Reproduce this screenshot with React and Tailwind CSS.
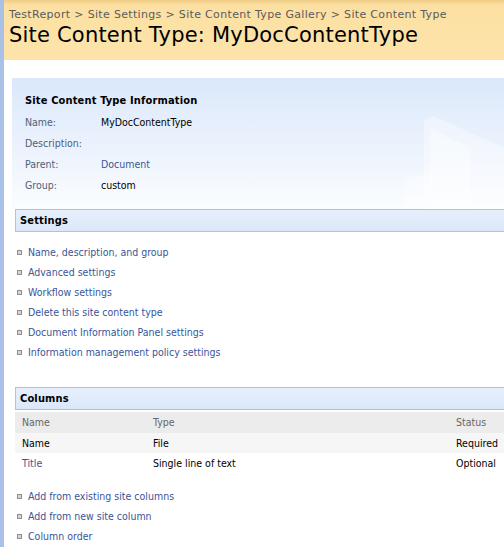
import React from "react";

const body = "font-['DejaVu_Sans_Condensed','DejaVu_Sans',sans-serif] text-[10.5px]";

function Bullet() {
  return <span className="inline-block w-[5px] h-[5px] border border-[#8e8e8e] bg-[#d6d6d6] shrink-0" />;
}

function LinkList({ items }) {
  return (
    <div className="flex flex-col ml-[5px]">
      {items.map((t) => (
        <div key={t} className="flex items-center h-[20px] gap-[6px]">
          <Bullet />
          <span className="text-[#3a559a] leading-[20px]">{t}</span>
        </div>
      ))}
    </div>
  );
}

function SectionBar({ title }) {
  return (
    <div className="ml-[3px] h-[23px] flex items-center pl-[4px] pt-[2px] border-t border-b border-l border-[#a9c4ea] bg-[linear-gradient(to_bottom,#e6effc,#dbe7f9)]">
      <span className="font-bold text-black text-[11px] tracking-[0.15px]">{title}</span>
    </div>
  );
}

export default function App() {
  const info = [
    ["Name:", "MyDocContentType", false],
    ["Description:", "", false],
    ["Parent:", "Document", true],
    ["Group:", "custom", false],
  ];
  return (
    <div className="w-[504px] h-[547px] overflow-hidden flex bg-white">
      <div className="w-[4px] shrink-0 bg-[#a9c1e7]" />
      <div className="flex-1 min-w-0 flex flex-col">
        <div className="h-[60px] pl-[5px] bg-[linear-gradient(to_bottom,#f0cc84_0px,#fce0a2_5px,#fde4ab_60px)] font-['DejaVu_Sans',sans-serif]">
          <div className="pt-[8px] text-[11px] leading-[14px] tracking-[0.33px] text-[#5b5b5b] whitespace-nowrap">
            TestReport &gt; Site Settings &gt; Site Content Type Gallery &gt; Site Content Type
          </div>
          <div className="text-[21px] leading-[26px] tracking-[0.2px] text-black whitespace-nowrap">
            Site Content Type: MyDocContentType
          </div>
        </div>
        <div className={`mt-[18px] ml-[8px] ${body}`}>
          <div className="relative pl-[13px] pt-[12px] pb-[13px] bg-[linear-gradient(to_bottom,#dbe8fb,#eef4fd_60%,#fbfdff)] overflow-hidden">
            <svg className="absolute right-0 top-[20px]" width="100" height="112" viewBox="0 0 100 112">
              <polygon points="20,22 30,18 100,50 100,112 20,112" fill="#ffffff" opacity="0.35" />
              <polygon points="26,30 66,50 66,112 26,112" fill="#ffffff" opacity="0.35" />
              <polygon points="0,80 28,74 28,112 0,112" fill="#ffffff" opacity="0.3" />
            </svg>
            <div className="relative h-[21px] leading-[21px] mb-[1px] font-bold text-black text-[11px] tracking-[0.15px]">
              Site Content Type Information
            </div>
            {info.map(([k, v, link]) => (
              <div key={k} className="relative flex h-[21px] leading-[21px]">
                <span className="w-[76px] text-[#4f607a]">{k}</span>
                <span className={link ? "text-[#3a559a]" : "text-black"}>{v}</span>
              </div>
            ))}
          </div>
          <SectionBar title="Settings" />
          <div className="mt-[10px]">
            <LinkList
              items={[
                "Name, description, and group",
                "Advanced settings",
                "Workflow settings",
                "Delete this site content type",
                "Document Information Panel settings",
                "Information management policy settings",
              ]}
            />
          </div>
          <div className="mt-[25px]">
            <SectionBar title="Columns" />
          </div>
          <div className="ml-[3px] mt-[2px]">
            <div className="grid grid-cols-[131px_303px_1fr] pl-[7px] h-[21px] leading-[21px] bg-[#ececec] text-[#666666]">
              <span>Name</span>
              <span>Type</span>
              <span>Status</span>
            </div>
            <div className="grid grid-cols-[131px_303px_1fr] pl-[7px] h-[20px] leading-[20px] bg-[#f6f6f6] text-black">
              <span>Name</span>
              <span>File</span>
              <span>Required</span>
            </div>
            <div className="grid grid-cols-[131px_303px_1fr] pl-[7px] h-[20px] leading-[20px] bg-white text-black">
              <span className="text-[#3a559a]">Title</span>
              <span>Single line of text</span>
              <span>Optional</span>
            </div>
          </div>
          <div className="mt-[13px]">
            <LinkList items={["Add from existing site columns", "Add from new site column", "Column order"]} />
          </div>
        </div>
      </div>
    </div>
  );
}
